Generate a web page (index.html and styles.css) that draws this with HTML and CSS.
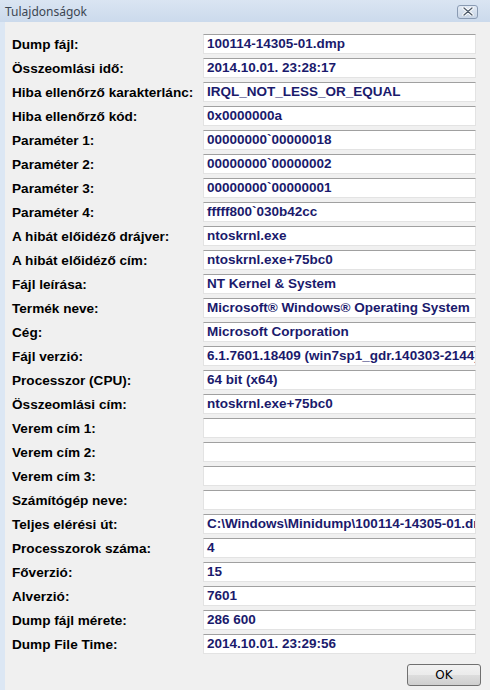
FILE: index.html
```html
<!DOCTYPE html>
<html lang="hu">
<head>
    <meta charset="UTF-8">
    <title>Tulajdonságok</title>
    <link rel="stylesheet" href="styles.css">
</head>
<body>
    <div class="window">
        <div class="titlebar">
            <span class="title">Tulajdonságok</span>
            <button class="close" type="button">
                <svg width="12" height="9" viewBox="0 0 12 9">
                    <path d="M2 1 L10 8 M10 1 L2 8" stroke="#ffffff" stroke-width="3.2" stroke-linecap="round"/>
                    <path d="M2 1 L10 8 M10 1 L2 8" stroke="#4d5a6a" stroke-width="1.3" stroke-linecap="round"/>
                </svg>
            </button>
        </div>

        <div class="content">
            <div class="props">
                <label>Dump fájl:</label><div class="field">100114-14305-01.dmp</div>
                <label>Összeomlási idő:</label><div class="field">2014.10.01. 23:28:17</div>
                <label>Hiba ellenőrző karakterlánc:</label><div class="field">IRQL_NOT_LESS_OR_EQUAL</div>
                <label>Hiba ellenőrző kód:</label><div class="field">0x0000000a</div>
                <label>Paraméter 1:</label><div class="field">00000000`00000018</div>
                <label>Paraméter 2:</label><div class="field">00000000`00000002</div>
                <label>Paraméter 3:</label><div class="field">00000000`00000001</div>
                <label>Paraméter 4:</label><div class="field">fffff800`030b42cc</div>
                <label>A hibát előidéző drájver:</label><div class="field">ntoskrnl.exe</div>
                <label>A hibát előidéző cím:</label><div class="field">ntoskrnl.exe+75bc0</div>
                <label>Fájl leírása:</label><div class="field">NT Kernel &amp; System</div>
                <label>Termék neve:</label><div class="field">Microsoft® Windows® Operating System</div>
                <label>Cég:</label><div class="field">Microsoft Corporation</div>
                <label>Fájl verzió:</label><div class="field">6.1.7601.18409 (win7sp1_gdr.140303-2144)</div>
                <label>Processzor (CPU):</label><div class="field">64 bit (x64)</div>
                <label>Összeomlási cím:</label><div class="field">ntoskrnl.exe+75bc0</div>
                <label>Verem cím 1:</label><div class="field"></div>
                <label>Verem cím 2:</label><div class="field"></div>
                <label>Verem cím 3:</label><div class="field"></div>
                <label>Számítógép neve:</label><div class="field"></div>
                <label>Teljes elérési út:</label><div class="field">C:\Windows\Minidump\100114-14305-01.dmp</div>
                <label>Processzorok száma:</label><div class="field">4</div>
                <label>Főverzió:</label><div class="field">15</div>
                <label>Alverzió:</label><div class="field">7601</div>
                <label>Dump fájl mérete:</label><div class="field">286 600</div>
                <label>Dump File Time:</label><div class="field">2014.10.01. 23:29:56</div>
            </div>

            <div class="actions">
                <button class="btn" type="button">OK</button>
            </div>
        </div>
    </div>
</body>
</html>
```

FILE: styles.css
```css
* {
    margin: 0;
    padding: 0;
    box-sizing: border-box;
}

body {
    width: 490px;
    height: 690px;
    overflow: hidden;
    background: #f0f0f0;
    font-family: 'Liberation Sans', Arial, sans-serif;
}

.window {
    width: 490px;
    height: 690px;
    background: #f0f0f0;
    border-left: 5px solid #dce7f4;
}

.titlebar {
    height: 22px;
    margin-left: -5px;
    display: flex;
    align-items: center;
    justify-content: space-between;
    padding: 0 12px 0 5px;
    background: linear-gradient(to bottom, #dae5f2 0%, #cbdaec 100%);
}

.title {
    font-size: 12px;
    color: #3c4652;
    font-family: 'Noto Sans', 'DejaVu Sans', sans-serif;
}

.close {
    width: 21px;
    height: 14px;
    margin-top: 1px;
    border: 1px solid #8a9bb3;
    border-radius: 3px;
    background: linear-gradient(to bottom, #e3ebf5 0%, #c8d5e6 100%);
    display: flex;
    align-items: center;
    justify-content: center;
}

.content {
    padding: 12px 9px 0 7px;
}

.props {
    display: grid;
    grid-template-columns: 191px 273px;
    row-gap: 4px;
    align-items: center;
}

.props label {
    font-size: 13.6px;
    font-weight: bold;
    color: #000;
    white-space: nowrap;
}

.field {
    height: 20px;
    background: #fff;
    border-top: 1px solid #a0a0a0;
    border-left: 1px solid #e3e3e3;
    border-right: 1px solid #e3e3e3;
    border-bottom: 1px solid #e3e3e3;
    padding: 1px 0 0 3px;
    font-size: 13.5px;
    font-weight: bold;
    color: #1a1a6c;
    white-space: nowrap;
    overflow: hidden;
}

.actions {
    display: flex;
    justify-content: flex-end;
    margin-top: 10px;
}

.btn {
    width: 74px;
    height: 22px;
    border: 1px solid #707070;
    border-radius: 3px;
    background: linear-gradient(to bottom, #f2f2f2 0%, #ebebeb 50%, #dddddd 51%, #cfcfcf 100%);
    font-family: 'DejaVu Sans', sans-serif;
    font-size: 12px;
    color: #000;
}
```
